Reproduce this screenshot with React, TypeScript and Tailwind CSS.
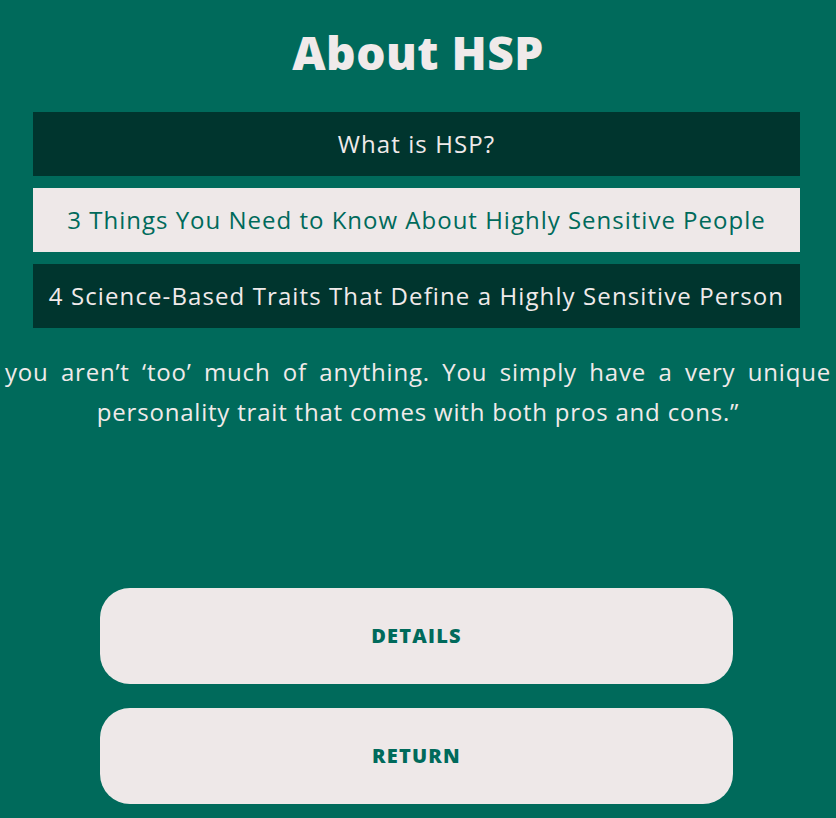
import React from "react";

const items = [
  { label: "What is HSP?", dark: true },
  { label: "3 Things You Need to Know About Highly Sensitive People", dark: false },
  { label: "4 Science-Based Traits That Define a Highly Sensitive Person", dark: true },
];

export default function App() {
  return (
    <div
      className="min-h-[818px] w-full bg-[#006a5b] flex flex-col overflow-hidden"
      style={{ fontFamily: "'Open Sans', 'Noto Sans', sans-serif" }}
    >
      <h1 className="pt-[26px] text-center text-[46px] leading-[52px] font-extrabold tracking-[0.5px] text-[#f0eaea]">
        About HSP
      </h1>
      <div className="mt-[34px] ml-[33px] w-[767px] flex flex-col gap-[12px]">
        {items.map((it) => (
          <div
            key={it.label}
            className={
              it.dark
                ? "h-[64px] flex items-center justify-center bg-[#00352e] text-[#f0eaea] text-[24px] tracking-[1.1px] whitespace-nowrap"
                : "h-[64px] flex items-center justify-center bg-[#eee8e8] text-[#006a5b] text-[24px] tracking-[1px] whitespace-nowrap"
            }
          >
            {it.label}
          </div>
        ))}
      </div>
      <p className="mt-[24px] px-[5px] text-[24px] leading-[40px] tracking-[0.8px] text-[#f0eaea] text-justify [text-align-last:center]">
        you aren’t ‘too’ much of anything. You simply have a very unique personality trait that comes with both pros and cons.”
      </p>
      <div className="mt-[156px] ml-[100px] w-[633px] flex flex-col gap-[24px]">
        <button className="w-full h-[96px] rounded-[30px] bg-[#eee8e8] text-[#006a5b] font-extrabold text-[20px] tracking-[1.2px]">
          DETAILS
        </button>
        <button className="w-full h-[96px] rounded-[30px] bg-[#eee8e8] text-[#006a5b] font-extrabold text-[20px] tracking-[1.2px]">
          RETURN
        </button>
      </div>
    </div>
  );
}
